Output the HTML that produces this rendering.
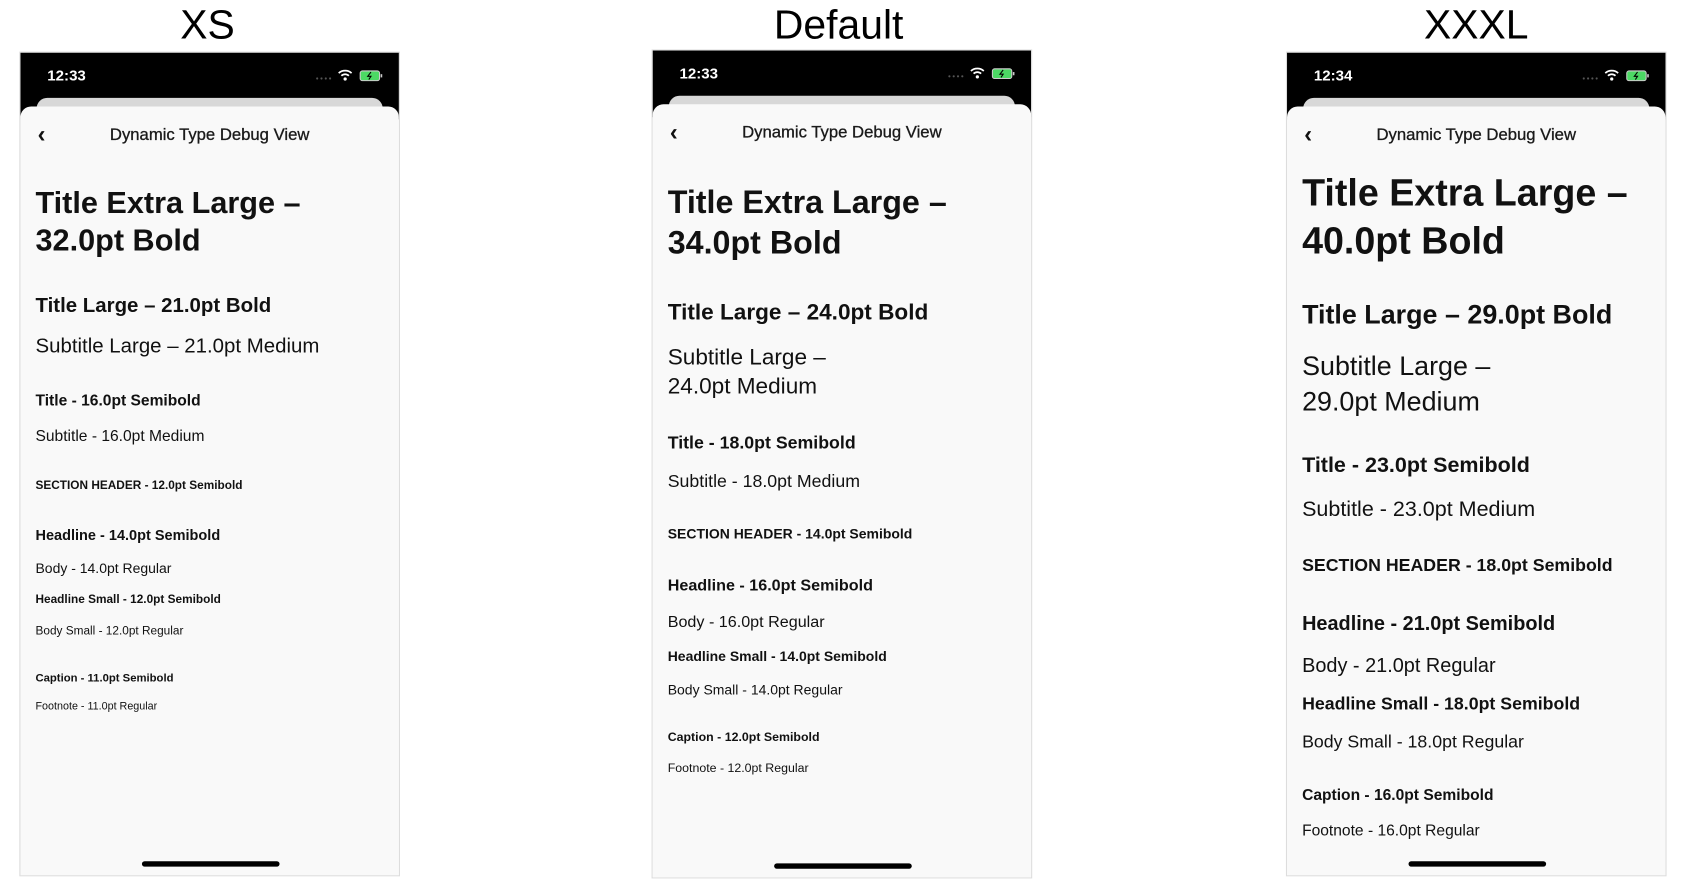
<!DOCTYPE html>
<html><head><meta charset="utf-8"><style>
html,body{margin:0;padding:0;background:#fff;width:1682px;height:880px;overflow:hidden}
#w{position:absolute;left:0;top:0;width:1560px;height:816px;transform:scale(1.0752);transform-origin:0 0;font-family:"Liberation Sans",sans-serif;color:#111}
.h{position:absolute;font-size:38px;line-height:46px;top:1px;width:300px;text-align:center;color:#000}
.ph{position:absolute;top:48px;width:354px;height:767px;background:#f9f9f9;border:1px solid #ddd;box-sizing:border-box;overflow:hidden}
.blk{position:absolute;left:0;top:0;right:0;height:62px;background:#000}
.card{position:absolute;left:15px;right:15px;top:42px;height:30px;background:#d8d8d8;border-radius:10px 10px 0 0}
.sheet{position:absolute;left:0;right:0;top:50px;bottom:0;background:#f9f9f9;border-radius:10px 10px 0 0}
.tm{position:absolute;left:25px;top:13px;color:#fff;font-size:14px;font-weight:bold}
.ic{position:absolute;right:14px;top:15px}
.bk{position:absolute;left:16px;font-size:22px;line-height:20px;font-weight:bold}
.nv{position:absolute;left:0;right:0;text-align:center;font-size:15.5px;color:#1a1a1a;-webkit-text-stroke:0.3px #1a1a1a}
.hm{position:absolute;left:113px;width:128px;height:5px;border-radius:3px;background:#000;bottom:8px}
.t{position:absolute;line-height:1.2;white-space:nowrap;color:#111}
.b{font-weight:bold}
</style></head><body><div id="w">
<div class="h" style="left:43px">XS</div>
<div class="h" style="left:630px">Default</div>
<div class="h" style="left:1223px">XXXL</div>

<div class="ph" style="left:18px"><div class="blk"></div><div class="card"></div><div class="sheet"></div>
<div class="tm">12:33</div>
<svg class="ic" width="64" height="12" viewBox="0 0 64 12"><g fill="#555"><circle cx="2" cy="9" r="1"/><circle cx="6" cy="9" r="1"/><circle cx="10" cy="9" r="1"/><circle cx="14" cy="9" r="1"/></g><path d="M22 4a9 9 0 0 1 12 0M24.5 6.5a5 5 0 0 1 7 0" stroke="#fff" stroke-width="1.6" fill="none"/><circle cx="28" cy="9.5" r="1.5" fill="#fff"/><rect x="42" y="2" width="18" height="9" rx="2" fill="#4cd964" stroke="#ccc"/><rect x="61" y="5" width="1.5" height="3" fill="#ccc"/><path d="M52 3l-3 4h3l-2 3" stroke="#000" fill="none"/></svg>
<div class="bk" style="top:66px">&#8249;</div><div class="nv" style="top:68px">Dynamic Type Debug View</div><div class="hm"></div></div>

<div class="ph" style="left:606px;top:46px;height:771px"><div class="blk"></div><div class="card"></div><div class="sheet"></div>
<div class="tm">12:33</div>
<svg class="ic" width="64" height="12" viewBox="0 0 64 12"><g fill="#555"><circle cx="2" cy="9" r="1"/><circle cx="6" cy="9" r="1"/><circle cx="10" cy="9" r="1"/><circle cx="14" cy="9" r="1"/></g><path d="M22 4a9 9 0 0 1 12 0M24.5 6.5a5 5 0 0 1 7 0" stroke="#fff" stroke-width="1.6" fill="none"/><circle cx="28" cy="9.5" r="1.5" fill="#fff"/><rect x="42" y="2" width="18" height="9" rx="2" fill="#4cd964" stroke="#ccc"/><rect x="61" y="5" width="1.5" height="3" fill="#ccc"/><path d="M52 3l-3 4h3l-2 3" stroke="#000" fill="none"/></svg>
<div class="bk" style="top:66px">&#8249;</div><div class="nv" style="top:68px">Dynamic Type Debug View</div><div class="hm"></div></div>

<div class="ph" style="left:1196px"><div class="blk"></div><div class="card"></div><div class="sheet"></div>
<div class="tm">12:34</div>
<svg class="ic" width="64" height="12" viewBox="0 0 64 12"><g fill="#555"><circle cx="2" cy="9" r="1"/><circle cx="6" cy="9" r="1"/><circle cx="10" cy="9" r="1"/><circle cx="14" cy="9" r="1"/></g><path d="M22 4a9 9 0 0 1 12 0M24.5 6.5a5 5 0 0 1 7 0" stroke="#fff" stroke-width="1.6" fill="none"/><circle cx="28" cy="9.5" r="1.5" fill="#fff"/><rect x="42" y="2" width="18" height="9" rx="2" fill="#4cd964" stroke="#ccc"/><rect x="61" y="5" width="1.5" height="3" fill="#ccc"/><path d="M52 3l-3 4h3l-2 3" stroke="#000" fill="none"/></svg>
<div class="bk" style="top:66px">&#8249;</div><div class="nv" style="top:68px">Dynamic Type Debug View</div><div class="hm"></div></div>

<div class="t b" style="left:33px;top:172px;font-size:28.5px">Title Extra Large –</div>
<div class="t b" style="left:33px;top:207px;font-size:28.5px">32.0pt Bold</div>
<div class="t b" style="left:33px;top:274px;font-size:19px">Title Large – 21.0pt Bold</div>
<div class="t" style="left:33px;top:312px;font-size:19px">Subtitle Large – 21.0pt Medium</div>
<div class="t b" style="left:33px;top:365px;font-size:14.5px">Title - 16.0pt Semibold</div>
<div class="t" style="left:33px;top:398px;font-size:14.5px">Subtitle - 16.0pt Medium</div>
<div class="t b" style="left:33px;top:446px;font-size:11px">SECTION HEADER - 12.0pt Semibold</div>
<div class="t b" style="left:33px;top:490px;font-size:13.5px">Headline - 14.0pt Semibold</div>
<div class="t" style="left:33px;top:521px;font-size:13px">Body - 14.0pt Regular</div>
<div class="t b" style="left:33px;top:552px;font-size:11px">Headline Small - 12.0pt Semibold</div>
<div class="t" style="left:33px;top:581px;font-size:11px">Body Small - 12.0pt Regular</div>
<div class="t b" style="left:33px;top:625px;font-size:10.5px">Caption - 11.0pt Semibold</div>
<div class="t" style="left:33px;top:652px;font-size:10px">Footnote - 11.0pt Regular</div>

<div class="t b" style="left:621px;top:171px;font-size:30px">Title Extra Large –</div>
<div class="t b" style="left:621px;top:209px;font-size:30px">34.0pt Bold</div>
<div class="t b" style="left:621px;top:278px;font-size:21px">Title Large – 24.0pt Bold</div>
<div class="t" style="left:621px;top:320px;font-size:21px">Subtitle Large –</div>
<div class="t" style="left:621px;top:347px;font-size:21px">24.0pt Medium</div>
<div class="t b" style="left:621px;top:403px;font-size:16.5px">Title - 18.0pt Semibold</div>
<div class="t" style="left:621px;top:439px;font-size:16.5px">Subtitle - 18.0pt Medium</div>
<div class="t b" style="left:621px;top:489px;font-size:13px">SECTION HEADER - 14.0pt Semibold</div>
<div class="t b" style="left:621px;top:536px;font-size:15px">Headline - 16.0pt Semibold</div>
<div class="t" style="left:621px;top:570px;font-size:15px">Body - 16.0pt Regular</div>
<div class="t b" style="left:621px;top:603px;font-size:13px">Headline Small - 14.0pt Semibold</div>
<div class="t" style="left:621px;top:634px;font-size:13px">Body Small - 14.0pt Regular</div>
<div class="t b" style="left:621px;top:680px;font-size:11.5px">Caption - 12.0pt Semibold</div>
<div class="t" style="left:621px;top:709px;font-size:11.5px">Footnote - 12.0pt Regular</div>

<div class="t b" style="left:1211px;top:159px;font-size:35px">Title Extra Large –</div>
<div class="t b" style="left:1211px;top:204px;font-size:35px">40.0pt Bold</div>
<div class="t b" style="left:1211px;top:278px;font-size:25px">Title Large – 29.0pt Bold</div>
<div class="t" style="left:1211px;top:326px;font-size:25px">Subtitle Large –</div>
<div class="t" style="left:1211px;top:359px;font-size:25px">29.0pt Medium</div>
<div class="t b" style="left:1211px;top:421px;font-size:20px">Title - 23.0pt Semibold</div>
<div class="t" style="left:1211px;top:462px;font-size:20px">Subtitle - 23.0pt Medium</div>
<div class="t b" style="left:1211px;top:517px;font-size:16.5px">SECTION HEADER - 18.0pt Semibold</div>
<div class="t b" style="left:1211px;top:569px;font-size:18.5px">Headline - 21.0pt Semibold</div>
<div class="t" style="left:1211px;top:608px;font-size:18.5px">Body - 21.0pt Regular</div>
<div class="t b" style="left:1211px;top:646px;font-size:16.5px">Headline Small - 18.0pt Semibold</div>
<div class="t" style="left:1211px;top:681px;font-size:16.5px">Body Small - 18.0pt Regular</div>
<div class="t b" style="left:1211px;top:732px;font-size:14.5px">Caption - 16.0pt Semibold</div>
<div class="t" style="left:1211px;top:765px;font-size:14.5px">Footnote - 16.0pt Regular</div>
</div></body></html>
